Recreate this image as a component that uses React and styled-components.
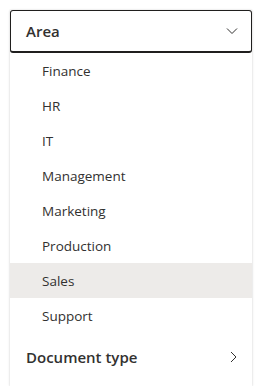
import React from 'react'
import styled, { createGlobalStyle } from 'styled-components'

const areas = ['Finance', 'HR', 'IT', 'Management', 'Marketing', 'Production', 'Sales', 'Support']

const GlobalStyle = createGlobalStyle`
	body {
		margin: 0;
		background: #fff;
		font-family: 'Open Sans', 'Noto Sans', sans-serif;
	}
`

const Chevron = ({ dir }) => (
	<svg width='12' height='12' viewBox='0 0 12 12' fill='none'>
		{dir === 'down' ? (
			<path d='M1 3.5 L6 8.5 L11 3.5' stroke='#323130' strokeWidth='1' />
		) : (
			<path d='M4 1 L9 6 L4 11' stroke='#323130' strokeWidth='1' />
		)}
	</svg>
)

const App = () => {
	return (
		<Page>
			<GlobalStyle />
			<Panel>
				<Header>
					<GroupTitle>Area</GroupTitle>
					<Chevron dir='down' />
				</Header>
				<List>
					{areas.map((name) => (
						<Item key={name} $active={name === 'Sales'}>
							{name}
						</Item>
					))}
				</List>
				<Group>
					<GroupTitle>Document type</GroupTitle>
					<Chevron dir='right' />
				</Group>
			</Panel>
		</Page>
	)
}

const Page = styled.div`
	padding: 10px 0 0 10px;
`

const Panel = styled.div`
	width: 242px;
	height: 376px;
	background: #fff;
	box-shadow: 0 0 2px rgba(0, 0, 0, 0.14), 0 1px 3px rgba(0, 0, 0, 0.08);
`

const Header = styled.div`
	display: flex;
	align-items: center;
	justify-content: space-between;
	box-sizing: border-box;
	height: 43px;
	padding: 0 13px 0 15px;
	border: 1px solid #201f1e;
	border-bottom-width: 2px;
	border-radius: 3px;
`

const GroupTitle = styled.span`
	font-size: 15px;
	font-weight: 600;
	color: #323130;
`

const List = styled.div`
	display: flex;
	flex-direction: column;
`

const Item = styled.div`
	height: 35px;
	display: flex;
	align-items: center;
	padding-left: 32px;
	font-size: 13.5px;
	color: #323130;
	background: ${(p) => (p.$active ? '#edebe9' : 'transparent')};
`

const Group = styled.div`
	display: flex;
	align-items: center;
	justify-content: space-between;
	height: 48px;
	padding: 0 13px 0 16px;
`

export default App
